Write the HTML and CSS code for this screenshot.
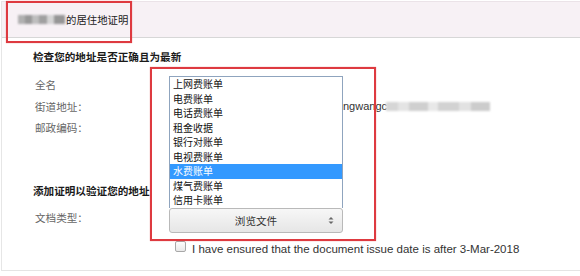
FILE: index.html
```html
<!DOCTYPE html>
<html lang="zh-CN">
<head>
<meta charset="utf-8">
<title>居住地证明</title>
<link rel="stylesheet" href="styles.css">
</head>
<body>
<div class="page">
  <header class="header">
    <h1 class="title"><span class="blur title-blur"></span>的居住地证明</h1>
  </header>
  <main class="content">
    <h2 class="section-title">检查您的地址是否正确且为最新</h2>
    <div class="row">
      <span class="label">全名</span>
      <span class="value"></span>
    </div>
    <div class="row">
      <span class="label">街道地址：</span>
      <span class="value addr">ngwangc<span class="blur addr-blur"></span></span>
    </div>
    <div class="row">
      <span class="label">邮政编码：</span>
      <span class="value"></span>
    </div>

    <h2 class="section-title second">添加证明以验证您的地址</h2>
    <div class="row doc-row">
      <span class="label doc-label">文档类型：</span>
      <div class="select-wrap">
        <button class="select" type="button">
          <span class="select-text">浏览文件</span>
          <svg class="select-arrows" width="6" height="9" viewBox="0 0 6 9" aria-hidden="true">
            <path d="M0.5 3.5 L3 1 L5.5 3.5 Z" fill="#666"/>
            <path d="M0.5 5.5 L3 8 L5.5 5.5 Z" fill="#666"/>
          </svg>
        </button>
        <ul class="listbox">
          <li>上网费账单</li>
          <li>电费账单</li>
          <li>电话费账单</li>
          <li>租金收据</li>
          <li>银行对账单</li>
          <li>电视费账单</li>
          <li class="selected">水费账单</li>
          <li>煤气费账单</li>
          <li>信用卡账单</li>
        </ul>
      </div>
    </div>
    <label class="check-row">
      <span class="checkbox"></span>
      <span class="check-text">I have ensured that the document issue date is after 3-Mar-2018</span>
    </label>
  </main>
  <div class="mark mark-title"></div>
  <div class="mark mark-list"></div>
</div>
</body>
</html>
```
FILE: styles.css
```css
* { box-sizing: border-box; }
html, body { margin: 0; padding: 0; background: #fff; }
body {
  font-family: "Noto Sans CJK SC", "Liberation Sans", sans-serif;
  color: #222;
  overflow: hidden;
}
.page {
  position: relative;
  width: 580px;
  height: 270px;
  margin-left: 1px;
  border-left: 1px solid #e6e6e6;
  border-bottom: 1px solid #e4e4e4;
}
.header {
  margin-top: 1px;
  height: 37px;
  background: #f7f1f5;
  border-top: 1px solid #ebe3e8;
  border-bottom: 1px solid #d7d7d7;
  display: flex;
  align-items: center;
  padding-left: 16px;
}
.title {
  margin: 0;
  font-size: 10.4px;
  font-weight: normal;
  color: #222;
  line-height: 16px;
  display: flex;
  align-items: center;
}
.blur {
  display: inline-block;
  filter: blur(1.2px);
}
.title-blur {
  width: 47px;
  height: 9px;
  margin-right: 1px;
  background: linear-gradient(90deg, #b0b0b0 0 14%, #989898 14% 30%, #bebebe 30% 44%, #a0a0a0 44% 62%, #d4d4d4 62% 76%, #969696 76% 100%);
}
.content {
  padding: 11px 0 0 31px;
}
.section-title {
  margin: 0;
  font-size: 10.6px;
  font-weight: bold;
  line-height: 16px;
  color: #1a1a1a;
}
.section-title.second { margin-top: 44px; }
.section-title + .row { margin-top: 9px; }
.row {
  display: flex;
  align-items: center;
  height: 21.5px;
}
.label {
  width: 136px;
  padding-left: 2px;
  font-size: 10.6px;
  color: #666;
  line-height: 21.5px;
  flex: none;
}
.value {
  font-family: "Liberation Sans", Arial, sans-serif;
  font-size: 11px;
  color: #333;
  white-space: nowrap;
  display: flex;
  align-items: center;
}
.addr { padding-left: 174px; }
.addr-blur {
  width: 104px;
  height: 9px;
  margin-left: -1px;
  background: linear-gradient(90deg, #d6d6d6 0 12%, #e4e4e4 12% 22%, #cfcfcf 22% 40%, #e8e8e8 40% 50%, #d2d2d2 50% 70%, #e2e2e2 70% 82%, #cccccc 82% 100%);
}
.doc-row {
  height: 25px;
  margin-top: 9px;
  align-items: flex-start;
}
.doc-label { line-height: 20px; }
.select-wrap {
  position: relative;
  width: 174px;
  height: 25px;
}
.select {
  width: 174px;
  height: 25px;
  margin: 0;
  padding: 0 8px 0 0;
  border: 1px solid #b9b9b9;
  border-radius: 3px;
  background: linear-gradient(#f7f7f7, #e6e6e6);
  display: flex;
  align-items: center;
  justify-content: flex-end;
  font-family: "Noto Sans CJK SC", sans-serif;
  font-size: 10.6px;
  color: #333;
  position: relative;
}
.select-text {
  position: absolute;
  left: 0;
  right: 0;
  text-align: center;
  line-height: 23px;
}
.select-arrows { position: relative; }
.listbox {
  position: absolute;
  left: 0;
  bottom: 25px;
  width: 174px;
  margin: 0;
  padding: 0;
  list-style: none;
  background: #fff;
  border: 1px solid #8fa4be;
  border-bottom: none;
}
.listbox li {
  height: 14.5px;
  line-height: 14.5px;
  padding-left: 3px;
  font-size: 10px;
  color: #111;
}
.listbox li.selected {
  background: #3399ff;
  color: #fff;
}
.check-row {
  display: flex;
  align-items: center;
  margin: 8px 0 0 142px;
  height: 16px;
}
.checkbox {
  width: 11px;
  height: 11px;
  border: 1px solid #a8a8a8;
  border-radius: 2px;
  background: linear-gradient(#fdfdfd, #e9e9e9);
  margin-right: 6px;
  margin-top: -4px;
}
.check-text {
  font-family: "Liberation Sans", Arial, sans-serif;
  font-size: 11.5px;
  color: #333;
  line-height: 16px;
}
.mark {
  position: absolute;
  border: 2px solid #de3a40;
  box-shadow: 0 0 1px rgba(222, 58, 64, 0.6);
}
.mark-title {
  left: 4px;
  top: 0;
  width: 126px;
  height: 42px;
}
.mark-list {
  left: 148px;
  top: 66px;
  width: 226px;
  height: 174px;
}
```
